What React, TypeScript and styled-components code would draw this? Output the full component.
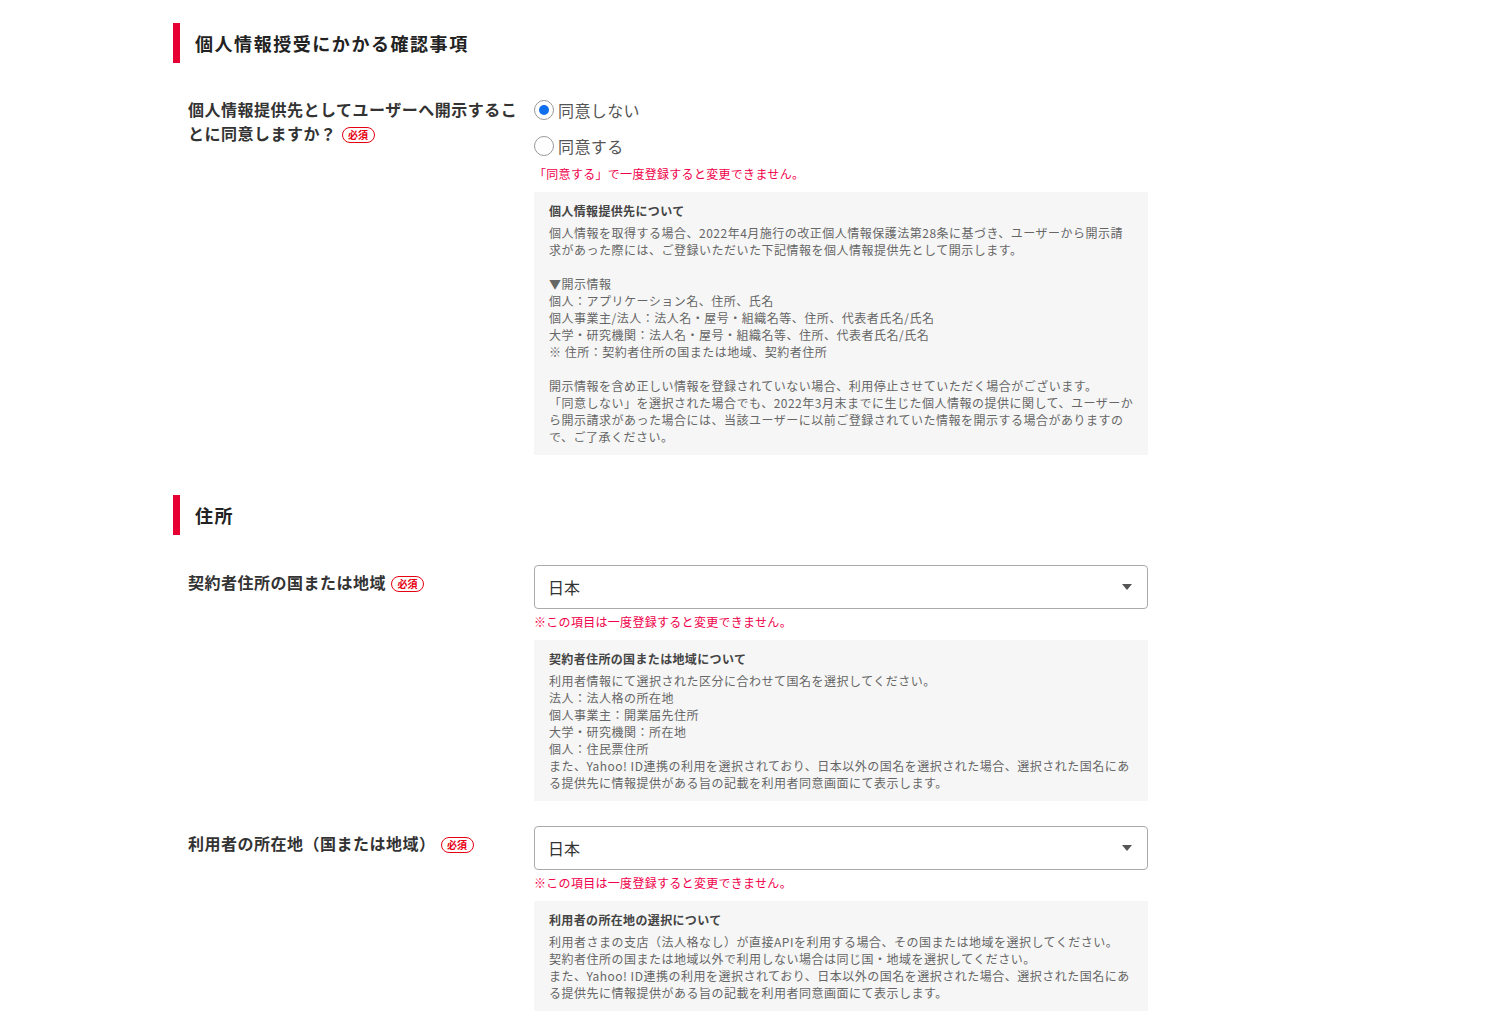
import { useState } from 'react';
import styled, { createGlobalStyle } from 'styled-components';

const GlobalStyle = createGlobalStyle`
    html, body {
        margin: 0;
        padding: 0;
        background: #fff;
    }
    body {
        font-family: 'Noto Sans CJK JP', 'Noto Sans', sans-serif;
        color: #333;
    }
`;

const Page = styled.div`
    padding: 23px 0 0 173px;
    width: 975px;
`;

const Section = styled.section<{ $first?: boolean }>`
    margin-top: ${props => (props.$first ? '0' : '40px')};
`;

const SectionTitle = styled.h2`
    margin: 0;
    height: 40px;
    display: flex;
    align-items: center;
    border-left: 7px solid #e60033;
    padding-left: 15px;
    font-size: 18px;
    font-weight: 700;
    letter-spacing: 1.55px;
    color: #222;
`;

const Row = styled.div<{ $gap: number }>`
    display: flex;
    align-items: flex-start;
    padding-left: 15px;
    margin-top: ${props => props.$gap}px;
`;

const Label = styled.div`
    width: 346px;
    flex-shrink: 0;
    box-sizing: border-box;
    padding: 5px 11px 0 0;
    font-size: 16px;
    line-height: 24px;
    font-weight: 700;
    letter-spacing: 0.5px;
    color: #333;
`;

const Required = styled.span`
    display: inline-block;
    width: 33px;
    height: 16px;
    box-sizing: border-box;
    margin-left: 5px;
    border: 1px solid #e60012;
    border-radius: 8px;
    font-size: 10px;
    line-height: 14px;
    text-align: center;
    font-weight: 700;
    letter-spacing: 0;
    color: #e60012;
    background: #fff;
    vertical-align: 1px;
`;

const Field = styled.div`
    width: 614px;
`;

const RadioRow = styled.label`
    display: flex;
    align-items: center;
    height: 36px;
    gap: 4px;
    cursor: pointer;
    font-size: 16px;
    letter-spacing: 0.4px;
    color: #555;
`;

const RadioCircle = styled.span<{ $checked: boolean }>`
    width: 20px;
    height: 20px;
    box-sizing: border-box;
    border: 1px solid #999;
    border-radius: 50%;
    display: flex;
    align-items: center;
    justify-content: center;
    background: #fff;

    &::after {
        content: '';
        width: 10px;
        height: 10px;
        border-radius: 50%;
        background: ${props => (props.$checked ? '#0f6fec' : 'transparent')};
    }
`;

const Note = styled.p<{ $top: number }>`
    margin: ${props => props.$top}px 0 0;
    font-size: 12px;
    line-height: 18px;
    letter-spacing: 0.3px;
    color: #f0004a;
`;

const SelectBox = styled.div`
    height: 44px;
    box-sizing: border-box;
    border: 1px solid #aaa;
    border-radius: 4px;
    display: flex;
    align-items: center;
    justify-content: space-between;
    padding: 0 15px 0 13px;
    font-size: 16px;
    color: #333;
    background: #fff;
`;

const Caret = styled.span`
    width: 0;
    height: 0;
    border-left: 5px solid transparent;
    border-right: 5px solid transparent;
    border-top: 6px solid #555;
`;

const InfoBox = styled.div`
    margin-top: 9px;
    background: #f6f6f6;
    padding: 10px 15px 10px;
    color: #666;
`;

const InfoTitle = styled.h3`
    margin: 0 0 4px;
    font-size: 12px;
    line-height: 18px;
    font-weight: 700;
    color: #444;
    letter-spacing: 0.35px;
`;

const InfoText = styled.p`
    margin: 0;
    font-size: 12px;
    line-height: 17px;
    letter-spacing: 0.5px;
    white-space: nowrap;

    & + & {
        margin-top: 17px;
    }
`;

const Select: React.FC<{ value: string }> = ({ value }) => (
    <SelectBox>
        <span>{value}</span>
        <Caret />
    </SelectBox>
);

const App: React.FC = () => {
    const [agree, setAgree] = useState<boolean>(false);

    return (
        <Page>
            <GlobalStyle />
            <Section $first>
                <SectionTitle>個人情報授受にかかる確認事項</SectionTitle>
                <Row $gap={29}>
                    <Label>
                        個人情報提供先としてユーザーへ開示することに同意しますか？
                        <Required>必須</Required>
                    </Label>
                    <Field>
                        <RadioRow onClick={() => setAgree(false)}>
                            <RadioCircle $checked={!agree} />
                            同意しない
                        </RadioRow>
                        <RadioRow onClick={() => setAgree(true)}>
                            <RadioCircle $checked={agree} />
                            同意する
                        </RadioRow>
                        <Note $top={1}>「同意する」で一度登録すると変更できません。</Note>
                        <InfoBox>
                            <InfoTitle>個人情報提供先について</InfoTitle>
                            <InfoText>
                                個人情報を取得する場合、2022年4月施行の改正個人情報保護法第28条に基づき、ユーザーから開示請
                                <br />
                                求があった際には、ご登録いただいた下記情報を個人情報提供先として開示します。
                            </InfoText>
                            <InfoText>
                                ▼開示情報
                                <br />
                                個人：アプリケーション名、住所、氏名
                                <br />
                                個人事業主/法人：法人名・屋号・組織名等、住所、代表者氏名/氏名
                                <br />
                                大学・研究機関：法人名・屋号・組織名等、住所、代表者氏名/氏名
                                <br />※ 住所：契約者住所の国または地域、契約者住所
                            </InfoText>
                            <InfoText>
                                開示情報を含め正しい情報を登録されていない場合、利用停止させていただく場合がございます。
                                <br />
                                「同意しない」を選択された場合でも、2022年3月末までに生じた個人情報の提供に関して、ユーザーか
                                <br />
                                ら開示請求があった場合には、当該ユーザーに以前ご登録されていた情報を開示する場合がありますの
                                <br />
                                で、ご了承ください。
                            </InfoText>
                        </InfoBox>
                    </Field>
                </Row>
            </Section>

            <Section>
                <SectionTitle>住所</SectionTitle>
                <Row $gap={30}>
                    <Label>
                        契約者住所の国または地域
                        <Required>必須</Required>
                    </Label>
                    <Field>
                        <Select value='日本' />
                        <Note $top={4}>※この項目は一度登録すると変更できません。</Note>
                        <InfoBox>
                            <InfoTitle>契約者住所の国または地域について</InfoTitle>
                            <InfoText>
                                利用者情報にて選択された区分に合わせて国名を選択してください。
                                <br />
                                法人：法人格の所在地
                                <br />
                                個人事業主：開業届先住所
                                <br />
                                大学・研究機関：所在地
                                <br />
                                個人：住民票住所
                                <br />
                                また、Yahoo! ID連携の利用を選択されており、日本以外の国名を選択された場合、選択された国名にあ
                                <br />
                                る提供先に情報提供がある旨の記載を利用者同意画面にて表示します。
                            </InfoText>
                        </InfoBox>
                    </Field>
                </Row>
                <Row $gap={25}>
                    <Label>
                        利用者の所在地（国または地域）
                        <Required>必須</Required>
                    </Label>
                    <Field>
                        <Select value='日本' />
                        <Note $top={4}>※この項目は一度登録すると変更できません。</Note>
                        <InfoBox>
                            <InfoTitle>利用者の所在地の選択について</InfoTitle>
                            <InfoText>
                                利用者さまの支店（法人格なし）が直接APIを利用する場合、その国または地域を選択してください。
                                <br />
                                契約者住所の国または地域以外で利用しない場合は同じ国・地域を選択してください。
                                <br />
                                また、Yahoo! ID連携の利用を選択されており、日本以外の国名を選択された場合、選択された国名にあ
                                <br />
                                る提供先に情報提供がある旨の記載を利用者同意画面にて表示します。
                            </InfoText>
                        </InfoBox>
                    </Field>
                </Row>
            </Section>
        </Page>
    );
};

export default App;
